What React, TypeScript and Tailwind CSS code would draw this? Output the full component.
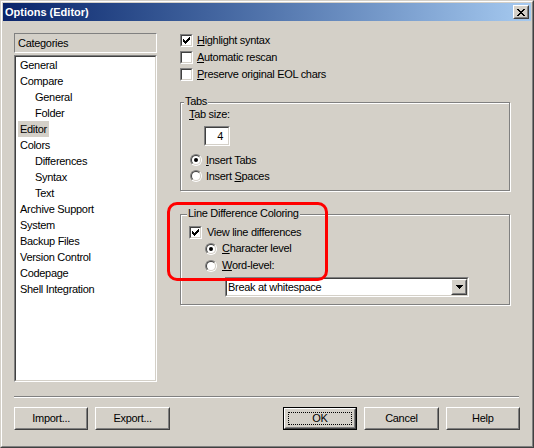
import React from 'react';

// Windows classic 3D edges
const raisedOuter = 'border border-t-white border-l-white border-r-[#404040] border-b-[#404040]';
const raisedInner = 'border border-t-[#d4d0c8] border-l-[#d4d0c8] border-r-[#808080] border-b-[#808080]';
const sunkenOuter = 'border border-t-[#808080] border-l-[#808080] border-r-white border-b-white';
const sunkenInner = 'border border-t-[#404040] border-l-[#404040] border-r-[#d4d0c8] border-b-[#d4d0c8]';

const CheckBox = ({ checked }: { checked?: boolean }) => (
  <div className={`w-[13px] h-[13px] shrink-0 ${sunkenOuter}`}>
    <div className={`w-full h-full bg-white ${sunkenInner}`}>
      {checked && (
        <svg width="9" height="9" viewBox="0 0 9 9" className="block">
          <path
            d="M1 3h1v3H1z M2 4h1v3H2z M3 5h1v3H3z M4 4h1v3H4z M5 3h1v3H5z M6 2h1v3H6z M7 1h1v3H7z"
            fill="#000"
          />
        </svg>
      )}
    </div>
  </div>
);

const Radio = ({ checked }: { checked?: boolean }) => (
  <div className={`w-[12px] h-[12px] shrink-0 rounded-full ${sunkenOuter}`}>
    <div className={`w-full h-full rounded-full bg-white flex items-center justify-center ${sunkenInner}`}>
      {checked && <div className="w-[4px] h-[4px] rounded-full bg-black" />}
    </div>
  </div>
);

const GroupBox = ({ label, labelLeft, className, children }: { label: string; labelLeft: string; className: string; children: React.ReactNode }) => (
  <div className={`relative border border-[#808080] shadow-[1px_1px_0_#fff,inset_1px_1px_0_#fff] ${className}`}>
    <span className={`absolute top-[-8px] ${labelLeft} bg-[#d4d0c8] px-[1px] leading-[13px]`}>{label}</span>
    {children}
  </div>
);

const Button = ({ label, isDefault, className = '' }: { label: string; isDefault?: boolean; className?: string }) => (
  <div className={`w-[75px] h-[23px] ${isDefault ? 'border border-black' : ''} ${className}`}>
    <div className={`w-full h-full ${raisedOuter}`}>
      <div className={`relative w-full h-full flex items-center justify-center ${raisedInner}`}>
        {isDefault && <div className="absolute inset-[2px] border border-dotted border-black" />}
        <span className="leading-[13px]">{label}</span>
      </div>
    </div>
  </div>
);

const categories = [
  { name: 'General', level: 0 },
  { name: 'Compare', level: 0 },
  { name: 'General', level: 1 },
  { name: 'Folder', level: 1 },
  { name: 'Editor', level: 0, selected: true },
  { name: 'Colors', level: 0 },
  { name: 'Differences', level: 1 },
  { name: 'Syntax', level: 1 },
  { name: 'Text', level: 1 },
  { name: 'Archive Support', level: 0 },
  { name: 'System', level: 0 },
  { name: 'Backup Files', level: 0 },
  { name: 'Version Control', level: 0 },
  { name: 'Codepage', level: 0 },
  { name: 'Shell Integration', level: 0 },
];

export default function App() {
  return (
    <div className="relative w-[534px] h-[448px] bg-[#d4d0c8] text-black text-[11px] tracking-[-0.3px] font-['Liberation_Sans',Arial,sans-serif] select-none">
      <div className="w-full h-full border border-t-[#d4d0c8] border-l-[#d4d0c8] border-r-[#404040] border-b-[#404040]">
        <div className="w-full h-full border border-t-white border-l-white border-r-[#808080] border-b-[#808080] p-[1px] flex flex-col">
          {/* title bar */}
          <div className="h-[18px] shrink-0 flex items-center bg-linear-to-r from-[#0a246a] to-[#a6caf0] pl-[2px] pr-[2px]">
            <span className="font-bold text-white tracking-normal leading-[13px]">Options (Editor)</span>
            <div className={`ml-auto w-[16px] h-[14px] bg-[#d4d0c8] ${raisedOuter}`}>
              <div className={`w-full h-full flex items-center justify-center ${raisedInner}`}>
                <svg width="8" height="7" viewBox="0 0 8 7" className="block">
                  <path
                    d="M0 0h2v1H0z M6 0h2v1H6z M1 1h2v1H1z M5 1h2v1H5z M2 2h4v1H2z M3 3h2v1H3z M2 4h4v1H2z M1 5h2v1H1z M5 5h2v1H5z M0 6h2v1H0z M6 6h2v1H6z"
                    fill="#000"
                  />
                </svg>
              </div>
            </div>
          </div>

          <div className="flex flex-col px-[11px] pt-[11px]">
            <div className="flex">
              {/* categories */}
              <div className="mt-[1px] w-[143px] flex flex-col">
                <div className="h-[20px] flex items-center pl-[3px] border border-t-[#808080] border-l-[#808080] border-r-white border-b-white">
                  <span className="leading-[13px]">Categories</span>
                </div>
                <div className={`mt-[2px] h-[327px] ${sunkenOuter}`}>
                  <div className={`w-full h-full bg-white ${sunkenInner}`}>
                    {categories.map((c, i) => (
                      <div key={i} className={`h-[16px] flex items-center ${c.level ? 'ml-[17px]' : 'ml-[2px]'}`}>
                        <span className={`h-[16px] flex items-center px-[2px] ${c.selected ? 'bg-[#d4d0c8]' : ''}`}>
                          <span className="leading-[13px]">{c.name}</span>
                        </span>
                      </div>
                    ))}
                  </div>
                </div>
              </div>

              {/* editor options */}
              <div className="ml-[23px] w-[330px] flex flex-col">
                <div className="h-[17px] flex items-center gap-[4px]">
                  <CheckBox checked />
                  <span className="leading-[13px]"><span className="underline">H</span>ighlight syntax</span>
                </div>
                <div className="h-[17px] flex items-center gap-[4px]">
                  <CheckBox />
                  <span className="leading-[13px]"><span className="underline">A</span>utomatic rescan</span>
                </div>
                <div className="h-[17px] flex items-center gap-[4px]">
                  <CheckBox />
                  <span className="leading-[13px]"><span className="underline">P</span>reserve original EOL chars</span>
                </div>

                <GroupBox label="Tabs" labelLeft="left-[3px]" className="mt-[19px] h-[89px]">
                  <div className="pl-[8px] pt-[4px] flex flex-col">
                    <div className="h-[14px] flex items-center">
                      <span className="leading-[13px]"><span className="underline">T</span>ab size:</span>
                    </div>
                    <div className={`mt-[5px] ml-[15px] w-[26px] h-[20px] ${sunkenOuter}`}>
                      <div className={`w-full h-full bg-white flex items-center justify-end pr-[5px] ${sunkenInner}`}>
                        <span className="leading-[13px]">4</span>
                      </div>
                    </div>
                    <div className="mt-[6px] ml-[1px] h-[16px] flex items-center gap-[4px]">
                      <Radio checked />
                      <span className="leading-[13px]"><span className="underline">I</span>nsert Tabs</span>
                    </div>
                    <div className="ml-[1px] h-[16px] flex items-center gap-[4px]">
                      <Radio />
                      <span className="leading-[13px]">Insert <span className="underline">S</span>paces</span>
                    </div>
                  </div>
                </GroupBox>

                <GroupBox label="Line Difference Coloring" labelLeft="left-[6px]" className="mt-[23px] h-[91px]">
                  <div className="pl-[8px] pt-[9px] flex flex-col">
                    <div className="h-[16px] flex items-center gap-[5px]">
                      <CheckBox checked />
                      <span className="leading-[13px]">View line differences</span>
                    </div>
                    <div className="ml-[16px] h-[17px] flex items-center gap-[5px]">
                      <Radio checked />
                      <span className="leading-[13px]"><span className="underline">C</span>haracter level</span>
                    </div>
                    <div className="ml-[16px] h-[17px] flex items-center gap-[5px]">
                      <Radio />
                      <span className="leading-[13px]"><span className="underline">W</span>ord-level:</span>
                    </div>
                    <div className={`mt-[3px] ml-[36px] w-[244px] h-[20px] ${sunkenOuter}`}>
                      <div className={`w-full h-full bg-white flex items-center ${sunkenInner}`}>
                        <span className="pl-[1px] leading-[13px]">Break at whitespace</span>
                        <div className={`ml-auto w-[16px] h-full bg-[#d4d0c8] ${raisedOuter}`}>
                          <div className={`w-full h-full flex items-center justify-center ${raisedInner}`}>
                            <svg width="7" height="4" viewBox="0 0 7 4" className="block">
                              <path d="M0 0h7v1H0z M1 1h5v1H1z M2 2h3v1H2z M3 3h1v1H3z" fill="#000" />
                            </svg>
                          </div>
                        </div>
                      </div>
                    </div>
                  </div>
                </GroupBox>
              </div>
            </div>

            {/* separator */}
            <div className="mt-[14px] w-[505px] h-[2px] border-t border-t-[#808080] border-b border-b-white" />

            {/* buttons */}
            <div className="mt-[9px] flex">
              <Button label="Import..." />
              <Button label="Export..." className="ml-[7px]" />
              <Button label="OK" isDefault className="ml-[113px]" />
              <Button label="Cancel" className="ml-[7px]" />
              <Button label="Help" className="ml-[7px]" />
            </div>
          </div>
        </div>
      </div>

      {/* red annotation */}
      <div className="absolute left-[167px] top-[202px] w-[161px] h-[79px] border-[3px] border-[#ff0000] rounded-[10px] pointer-events-none" />
    </div>
  );
}
